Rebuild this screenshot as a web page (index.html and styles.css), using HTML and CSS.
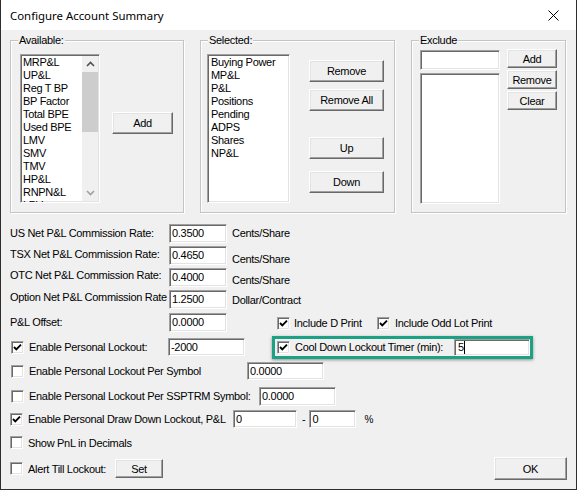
FILE: index.html
```html
<!DOCTYPE html>
<html>
<head>
<meta charset="utf-8">
<link rel="stylesheet" href="styles.css">
</head>
<body>
<div class="window">
  <div class="titlebar">
    <span class="title">Configure Account Summary</span>
    <span class="close"><svg width="11" height="11" viewBox="0 0 11 11"><path d="M0.5 0.5L10.5 10.5M10.5 0.5L0.5 10.5" stroke="#000" stroke-width="1" fill="none"/></svg></span>
  </div>
  <div class="content">
    <div class="groups">
      <div class="group g-avail">
        <span class="legend">Available:</span>
        <div class="listbox lb-avail">
          <div class="items">
            <div>MRP&amp;L</div><div>UP&amp;L</div><div>Reg T BP</div><div>BP Factor</div><div>Total BPE</div><div>Used BPE</div><div>LMV</div><div>SMV</div><div>TMV</div><div>HP&amp;L</div><div>RNPN&amp;L</div><div>LPV</div>
          </div>
          <div class="scrollbar">
            <div class="sb-btn"><svg width="9" height="6" viewBox="0 0 9 6"><path d="M1 5L4.5 1.5L8 5" stroke="#505050" stroke-width="1.6" fill="none"/></svg></div>
            <div class="sb-thumb"></div>
            <div class="sb-track"></div>
            <div class="sb-btn"><svg width="9" height="6" viewBox="0 0 9 6"><path d="M1 1L4.5 4.5L8 1" stroke="#a0a0a0" stroke-width="1.6" fill="none"/></svg></div>
          </div>
        </div>
        <button class="btn btn-add">Add</button>
      </div>

      <div class="group g-sel">
        <span class="legend">Selected:</span>
        <div class="listbox lb-sel">
          <div class="items">
            <div>Buying Power</div><div>MP&amp;L</div><div>P&amp;L</div><div>Positions</div><div>Pending</div><div>ADPS</div><div>Shares</div><div>NP&amp;L</div>
          </div>
        </div>
        <div class="sel-buttons">
          <button class="btn sel-btn">Remove</button>
          <button class="btn sel-btn b-removeall">Remove All</button>
          <button class="btn sel-btn b-up">Up</button>
          <button class="btn sel-btn b-down">Down</button>
        </div>
      </div>

      <div class="group g-excl">
        <span class="legend">Exclude</span>
        <div class="excl-left">
          <div class="field excl-input"></div>
          <div class="listbox lb-excl"></div>
        </div>
        <div class="excl-buttons">
          <button class="btn excl-btn">Add</button>
          <button class="btn excl-btn">Remove</button>
          <button class="btn excl-btn">Clear</button>
        </div>
      </div>
    </div>

    <div class="form">
      <div class="row rate">
        <span class="lbl">US Net P&amp;L Commission Rate:</span>
        <div class="field rate-field">0.3500</div>
        <span class="unit">Cents/Share</span>
      </div>
      <div class="row rate">
        <span class="lbl lift1">TSX Net P&amp;L Commission Rate:</span>
        <div class="field rate-field">0.4650</div>
        <span class="unit drop4">Cents/Share</span>
      </div>
      <div class="row rate">
        <span class="lbl lift2">OTC Net P&amp;L Commission Rate:</span>
        <div class="field rate-field">0.4000</div>
        <span class="unit drop3">Cents/Share</span>
      </div>
      <div class="row rate">
        <span class="lbl lift2">Option Net P&amp;L Commission Rate</span>
        <div class="field rate-field">1.2500</div>
        <span class="unit drop1">Dollar/Contract</span>
      </div>
      <div class="row offset">
        <span class="lbl">P&amp;L Offset:</span>
        <div class="field rate-field">0.0000</div>
        <label class="chk chk-dprint drop1"><span class="cb"><svg width="9" height="9" viewBox="0 0 9 9"><path d="M1 4L3.3 6.3L8 1.6" stroke="#000" stroke-width="1.9" fill="none"/></svg></span><span>Include D Print</span></label>
        <label class="chk drop1"><span class="cb"><svg width="9" height="9" viewBox="0 0 9 9"><path d="M1 4L3.3 6.3L8 1.6" stroke="#000" stroke-width="1.9" fill="none"/></svg></span><span>Include Odd Lot Print</span></label>
      </div>
      <div class="row lockout">
        <label class="chk chk-lockout"><span class="cb"><svg width="9" height="9" viewBox="0 0 9 9"><path d="M1 4L3.3 6.3L8 1.6" stroke="#000" stroke-width="1.9" fill="none"/></svg></span><span>Enable Personal Lockout:</span></label>
        <div class="field lockout-field">-2000</div>
        <div class="highlight">
          <label class="chk chk-cool"><span class="cb"><svg width="9" height="9" viewBox="0 0 9 9"><path d="M1 4L3.3 6.3L8 1.6" stroke="#000" stroke-width="1.9" fill="none"/></svg></span><span>Cool Down Lockout Timer (min):</span></label>
          <div class="field cool-field">5<span class="caret"></span></div>
        </div>
      </div>
      <div class="row persym">
        <label class="chk chk-persym"><span class="cb"></span><span>Enable Personal Lockout Per Symbol</span></label>
        <div class="field wide-field">0.0000</div>
      </div>
      <div class="row ssptrm">
        <label class="chk chk-ssptrm"><span class="cb"></span><span>Enable Personal Lockout Per SSPTRM Symbol:</span></label>
        <div class="field wide-field tall">0.0000</div>
      </div>
      <div class="row drawdown">
        <label class="chk chk-draw"><span class="cb"><svg width="9" height="9" viewBox="0 0 9 9"><path d="M1 4L3.3 6.3L8 1.6" stroke="#000" stroke-width="1.9" fill="none"/></svg></span><span>Enable Personal Draw Down Lockout, P&amp;L</span></label>
        <div class="field dd-field1">0</div>
        <span class="dash">-</span>
        <div class="field dd-field2">0</div>
        <span class="pct">%</span>
      </div>
      <div class="row decimals">
        <label class="chk chk-left"><span class="cb"></span><span>Show PnL in Decimals</span></label>
      </div>
      <div class="row alert">
        <label class="chk chk-left chk-alert"><span class="cb"></span><span>Alert Till Lockout:</span></label>
        <button class="btn set-btn">Set</button>
        <button class="btn ok-btn">OK</button>
      </div>
    </div>
  </div>
</div>
</body>
</html>
```

FILE: styles.css
```css
* { box-sizing: border-box; }

body {
  margin: 0;
  background: #ffffff;
}

.window {
  width: 577px;
  height: 490px;
  border: 1px solid #2e2e2e;
  border-top: none;
  background: #f0f0f0;
  font-family: "Liberation Sans", Arial, sans-serif;
  font-size: 11px;
  letter-spacing: -0.3px;
  color: #000;
  display: flex;
  flex-direction: column;
}

/* title bar */
.titlebar {
  height: 30px;
  flex-shrink: 0;
  background: #ffffff;
  display: flex;
  align-items: center;
}

.title {
  padding-left: 9px;
  font-family: "Noto Sans", "Open Sans", sans-serif;
  font-size: 11.4px;
  letter-spacing: 0;
  color: #000;
}

.close {
  margin-left: auto;
  width: 46px;
  height: 30px;
  display: flex;
  align-items: center;
  justify-content: center;
}

.content {
  flex: 1;
  padding: 10px 9px 0 9px;
}

/* group boxes */
.groups {
  display: flex;
  align-items: flex-start;
}

.group {
  position: relative;
  height: 173px;
  border: 1px solid #c4c4c4;
  box-shadow: inset 1px 1px 0 #ffffff, 1px 1px 0 #ffffff;
  display: flex;
  align-items: flex-start;
}

.legend {
  position: absolute;
  top: -7px;
  left: 7px;
  padding: 0 1px;
  line-height: 13px;
  background: #f0f0f0;
}

.g-avail {
  width: 174px;
  padding: 13px 0 0 9px;
}

.g-sel {
  width: 195px;
  margin-left: 16px;
  padding: 13px 0 0 6px;
}

.g-excl {
  width: 155px;
  margin-left: 16px;
  padding: 8px 0 0 8px;
}

/* sunken controls */
.listbox,
.field,
.cb {
  background: #ffffff;
  border: 1px solid;
  border-color: #a0a0a0 #ffffff #ffffff #a0a0a0;
  box-shadow: inset 1px 1px 0 #696969, inset -1px -1px 0 #e3e3e3;
}

.listbox {
  display: flex;
  overflow: hidden;
  flex-shrink: 0;
}

.items {
  flex: 1;
  padding: 1px 0 0 2px;
  line-height: 13px;
  white-space: nowrap;
  overflow: hidden;
}

.lb-avail {
  width: 80px;
  height: 149px;
}

.lb-sel {
  width: 83px;
  height: 149px;
}

.lb-sel .items {
  padding-left: 3px;
}

.scrollbar {
  width: 16px;
  margin: 1px 1px 1px 0;
  background: #f0f0f0;
  display: flex;
  flex-direction: column;
}

.sb-btn {
  height: 16px;
  display: flex;
  align-items: center;
  justify-content: center;
  flex-shrink: 0;
}

.sb-thumb {
  height: 60px;
  background: #cdcdcd;
  flex-shrink: 0;
}

.sb-track {
  flex: 1;
}

/* raised buttons */
.btn {
  font: inherit;
  letter-spacing: inherit;
  color: #000;
  padding: 0;
  background: #f0f0f0;
  border: 1px solid;
  border-color: #ffffff #696969 #696969 #ffffff;
  box-shadow: inset -1px -1px 0 #a0a0a0, inset 1px 1px 0 #e3e3e3;
  flex-shrink: 0;
}

.btn-add {
  width: 61px;
  height: 22px;
  margin: 58px 0 0 12px;
}

.sel-buttons {
  display: flex;
  flex-direction: column;
  margin: 6px 0 0 19px;
}

.sel-btn {
  width: 75px;
  height: 22px;
}

.b-removeall { margin-top: 7px; }
.b-up { margin-top: 26px; }
.b-down { margin-top: 12px; }

.excl-left {
  display: flex;
  flex-direction: column;
  margin-top: 1px;
}

.excl-input {
  width: 80px;
  height: 20px;
}

.lb-excl {
  width: 80px;
  height: 131px;
  margin-top: 3px;
}

.excl-buttons {
  display: flex;
  flex-direction: column;
  gap: 2px;
  margin-left: 7px;
}

.excl-btn {
  width: 50px;
  height: 19px;
}

/* lower form */
.form {
  margin-top: 9px;
}

.row {
  display: flex;
  align-items: center;
}

.rate { height: 22px; }
.offset { height: 24px; }
.lockout { height: 26px; }
.persym { height: 22px; }
.ssptrm { height: 28px; }
.drawdown { height: 18px; }
.decimals { height: 29px; }
.alert { height: 23px; }

.lbl {
  width: 159px;
  flex-shrink: 0;
  white-space: nowrap;
}

.lift1 { margin-bottom: 2px; }
.lift2 { margin-bottom: 4px; }
.drop1 { margin-top: 2px; }
.drop3 { margin-top: 6px; }
.drop4 { margin-top: 8px; }

.field {
  display: flex;
  align-items: center;
  padding-left: 2px;
  flex-shrink: 0;
  white-space: nowrap;
}

.rate-field {
  width: 58px;
  height: 19px;
}

.unit {
  margin-left: 5px;
  white-space: nowrap;
}

.chk {
  display: flex;
  align-items: center;
  gap: 5px;
  flex-shrink: 0;
  white-space: nowrap;
}

.cb {
  width: 13px;
  height: 13px;
  display: flex;
  align-items: center;
  justify-content: center;
  flex-shrink: 0;
}

.chk-dprint {
  width: 100px;
  margin-left: 50px;
  gap: 4px;
}

.chk-lockout {
  width: 157px;
  margin-left: 1px;
}

.lockout-field {
  width: 77px;
  height: 18px;
}

.highlight {
  display: flex;
  align-items: center;
  margin-left: 27px;
  border: 3px solid #1ca184;
  box-shadow: 0 1px 3px rgba(0, 0, 0, 0.4);
  padding-left: 2px;
}

.chk-cool {
  width: 177px;
}

.cool-field {
  width: 76px;
  height: 17px;
  padding-left: 3px;
}

.caret {
  display: inline-block;
  width: 1px;
  height: 13px;
  background: #000;
}

.chk-persym {
  width: 236px;
  margin-left: 1px;
}

.wide-field {
  width: 77px;
  height: 18px;
}

.wide-field.tall {
  height: 19px;
}

.chk-ssptrm {
  width: 248px;
  margin-left: 1px;
}

.chk-draw {
  width: 223px;
}

.dd-field1 {
  width: 64px;
  height: 18px;
}

.dash {
  margin-left: 5px;
}

.dd-field2 {
  width: 47px;
  height: 18px;
  margin-left: 4px;
}

.pct {
  margin-left: 8px;
  font-size: 10px;
}

.chk-alert {
  width: 105px;
}

.set-btn {
  width: 48px;
  height: 19px;
}

.ok-btn {
  width: 73px;
  height: 23px;
  margin-left: auto;
}
```
